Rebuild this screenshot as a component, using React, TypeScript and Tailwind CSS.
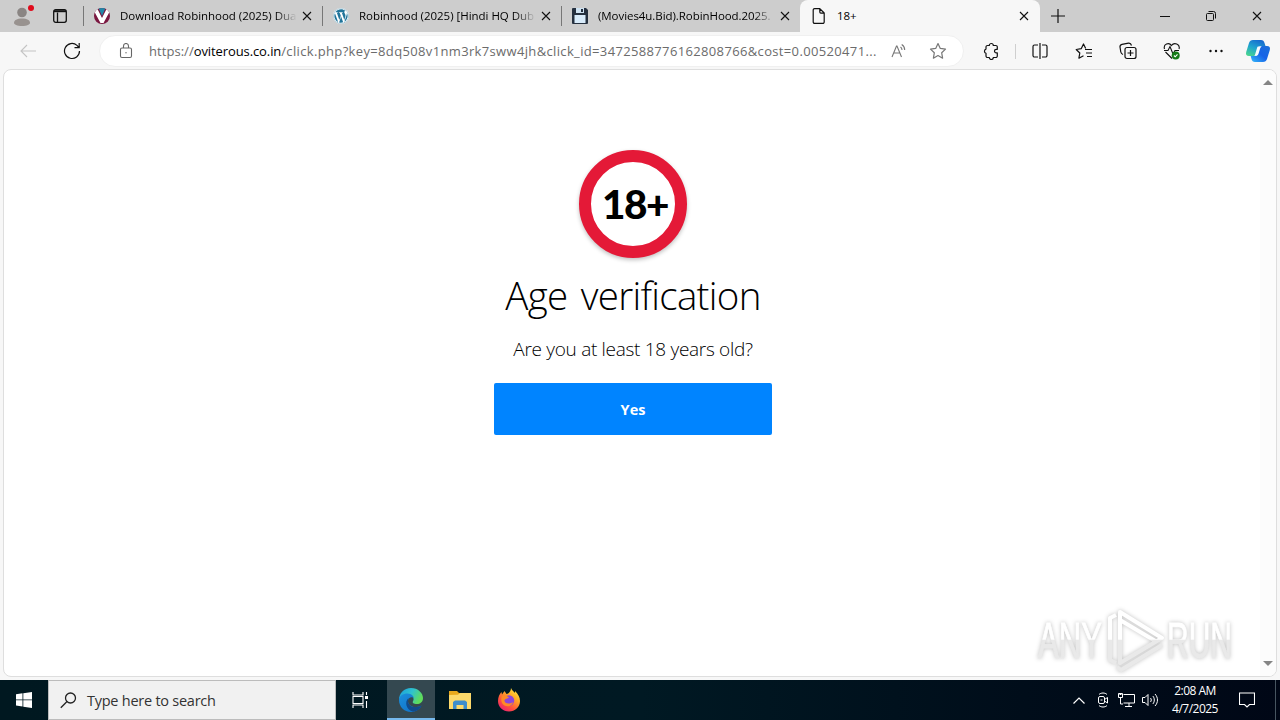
import React from 'react';
import { FaWordpress } from 'react-icons/fa';

function CloseIcon() {
  return (
    <svg width="10" height="10" viewBox="0 0 10 10" fill="none" stroke="#111" strokeWidth="1.1">
      <path d="M1 1l8 8M9 1l-8 8" />
    </svg>
  );
}

function VegaIcon() {
  return (
    <svg width="16" height="16" viewBox="0 0 16 16">
      <defs>
        <clipPath id="vega">
          <circle cx="8" cy="8" r="8" />
        </clipPath>
      </defs>
      <g clipPath="url(#vega)">
        <rect width="16" height="16" fill="#7a1740" />
        <path d="M0 3l3-3 5 10 5-10 3 3-6.500 12h-3z" fill="#fff" />
        <path d="M4.500 0h7L8 8z" fill="#2187a8" />
      </g>
    </svg>
  );
}

function FloppyIcon() {
  return (
    <svg width="16" height="16" viewBox="0 0 16 16">
      <path d="M1 0h13l2 2v13a1 1 0 0 1-1 1H1a1 1 0 0 1-1-1V1a1 1 0 0 1 1-1z" fill="#25303f" />
      <path d="M4 0h8v5H4z" fill="#cfe2f1" />
      <path d="M9 1h2v3H9z" fill="#25303f" />
      <path d="M2.500 7h11v8h-11z" fill="#d8ebfa" />
    </svg>
  );
}

function PageIcon() {
  return (
    <svg width="16" height="16" viewBox="0 0 16 16" fill="none" stroke="#111" strokeWidth="1.200" strokeLinejoin="round">
      <path d="M3.200.6h5.600l4.400 4.400v9a1.400 1.400 0 0 1-1.400 1.400H3.600A1.400 1.400 0 0 1 2.200 14V2A1.400 1.400 0 0 1 3.600.6M8.800.6v3.500a1 1 0 0 0 1 1h3.400" />
    </svg>
  );
}

const tabs = [
  { title: 'Download Robinhood (2025) Dua', icon: <VegaIcon />, spacing: 'tracking-[-0.03px]' },
  { title: 'Robinhood (2025) [Hindi HQ Dub', icon: <FaWordpress size={16} color="#21759b" className="rounded-full bg-white" />, spacing: 'tracking-[-0.03px]' },
  { title: '(Movies4u.Bid).RobinHood.2025.', icon: <FloppyIcon />, spacing: 'tracking-[-0.06px]' },
];

function TabStrip() {
  return (
    <div className="flex h-8 bg-[#cdcdcd]">
      <div className="relative flex w-[83px] shrink-0 items-center">
        <svg width="20" height="20" viewBox="0 0 20 20" className="ml-3" fill="#8a8583">
          <circle cx="10" cy="6.500" r="4.800" />
          <path d="M2 17c0-3 3-4.500 8-4.500s8 1.500 8 4.500c0 1.500-3 3-8 3s-8-1.500-8-3z" fill="#98928f" />
        </svg>
        <span className="absolute left-7 top-[5px] h-[6px] w-[6px] rounded-full bg-[#e00b1c]" />
        <svg width="14" height="14" viewBox="0 0 14 14" className="ml-[21px]" fill="none" stroke="#111" strokeWidth="1.300">
          <rect x=".7" y=".7" width="12.600" height="12.600" rx="2" />
          <path d="M1 2.200h12" strokeWidth="2" />
          <path d="M4.500 3.500v10" />
        </svg>
      </div>
      {tabs.map((tab) => (
        <div key={tab.title} className="flex w-[239px] shrink-0 items-center">
          <div className="h-5 w-px bg-[#777]" />
          <div className="ml-[10px] w-4 shrink-0">{tab.icon}</div>
          <div
            className={`ml-[10px] w-[177px] overflow-hidden whitespace-nowrap bg-[linear-gradient(90deg,#000_88%,transparent_100%)] bg-clip-text text-[11.5px] text-transparent ${tab.spacing}`}
          >
            {tab.title}
          </div>
          <div className="ml-[5px]">
            <CloseIcon />
          </div>
        </div>
      ))}
      <div className="flex w-60 shrink-0 items-center rounded-t-lg bg-[#f7f7f7]">
        <div className="ml-[11px] w-4">
          <PageIcon />
        </div>
        <span className="ml-[10px] text-[11.5px] tracking-[-0.1px] text-black">18+</span>
        <div className="ml-auto mr-[11px]">
          <CloseIcon />
        </div>
      </div>
      <div className="flex grow items-center">
        <svg width="14" height="14" viewBox="0 0 14 14" className="ml-[11px]" stroke="#111" strokeWidth="1.200">
          <path d="M7 0v14M0 7h14" />
        </svg>
        <svg width="10" height="10" viewBox="0 0 10 10" className="ml-[95px]" stroke="#111">
          <path d="M0 5.500h10" />
        </svg>
        <svg width="10" height="10" viewBox="0 0 10 10" className="ml-9" fill="none" stroke="#111">
          <rect x=".5" y="2.500" width="7" height="7" rx="1" />
          <path d="M2.500 .5H7.500a2 2 0 0 1 2 2V7.500" />
        </svg>
        <div className="ml-[36px]">
          <CloseIcon />
        </div>
      </div>
    </div>
  );
}

function Toolbar() {
  return (
    <div className="flex h-[38px] items-center">
      <svg width="16" height="14" viewBox="0 0 16 14" className="ml-5" fill="none" stroke="#c4c4c4" strokeWidth="1.100">
        <path d="M7 1L1 7l6 6M1 7h15" />
      </svg>
      <svg width="18" height="18" viewBox="0 0 18 18" className="ml-[27px]" fill="none" stroke="#111" strokeWidth="1.200">
        <path d="M16.500 9A7.500 7.500 0 1 1 14 3.400L16 5.500M16.200 1v4.700h-4.700" />
      </svg>
      <div className="ml-[18px] flex h-8 w-[865px] shrink-0 items-center rounded-full border border-[#f0f0f0] bg-white">
        <svg width="14" height="16" viewBox="0 0 14 16" className="ml-[19px]" fill="none" stroke="#666" strokeWidth="1.100">
          <rect x="1.500" y="5" width="11" height="9.500" rx="1.500" />
          <path d="M4.500 5V3a2.500 2.500 0 0 1 5 0v2" />
          <circle cx="7" cy="9.700" r=".7" fill="#666" stroke="none" />
        </svg>
        <div className="ml-[16px] mt-px w-[730px] whitespace-nowrap text-[13px] tracking-[0.35px] text-[#6b6b6b]">
          <span className="tracking-[0.05px]">https://</span>
          <span className="tracking-[-0.1px] text-black">oviterous.co.in</span>
          /click.php?key=8dq508v1nm3rk7sww4jh&amp;click_id=3472588776162808766&amp;cost=0.00520471...
        </div>
        <svg width="17" height="16" viewBox="0 0 17 16" className="ml-[12px]" fill="none" stroke="#777" strokeWidth="1.100">
          <path d="M1 14L5.500 3h.500l4.500 11M2.500 10h6.500M9.500 4c1 .7 1.500 1.800 1.500 3M10.700 1.500c2 1.200 3 3 3 5.500" />
        </svg>
        <svg width="18" height="18" viewBox="0 0 18 18" className="ml-[21px]" fill="none" stroke="#777" strokeWidth="1.200" strokeLinejoin="round">
          <path d="M9 1.500l2.300 4.900 5.200.7-3.800 3.700.9 5.400L9 13.600l-4.600 2.600.9-5.400L1.500 7.100l5.200-.7z" />
        </svg>
      </div>
      <svg width="16" height="18" viewBox="0 0 16 18" className="ml-[19px]" fill="none" stroke="#111" strokeWidth="1.200" strokeLinejoin="round">
        <path d="M4.500 3.500H6.300a2 2 0 0 1 4 0h2.500a1.500 1.500 0 0 1 1.500 1.500v2.300h-1a1.800 1.800 0 0 0 0 3.600h1V14a1.500 1.500 0 0 1-1.500 1.500h-2.500a2 2 0 0 1-4 0H4.500A1.500 1.500 0 0 1 3 14v-2.700a2.200 2.200 0 0 1 0-4.200V5a1.500 1.500 0 0 1 1.500-1.500z" />
      </svg>
      <div className="ml-[16px] h-[15px] w-px bg-[#cfcfcf]" />
      <svg width="16" height="16" viewBox="0 0 16 16" className="ml-[16px]" fill="none" stroke="#111" strokeWidth="1.200">
        <path d="M6 2H2.500a1.500 1.500 0 0 0-1.500 1.500v9a1.500 1.500 0 0 0 1.500 1.500H6M8 0v16M10 2h3.500a1.500 1.500 0 0 1 1.500 1.500v9a1.500 1.500 0 0 1-1.500 1.500H10" />
      </svg>
      <svg width="18" height="17" viewBox="0 0 18 17" className="ml-[27px]" fill="none" stroke="#111" strokeWidth="1.200" strokeLinejoin="round">
        <path d="M10.700 5.500L8.500 1 6.200 5.700l-5 .8 3.600 3.500-.9 5.200 4.600-2.500M10 6.500h7M11 10h6M12 13.500h5" />
      </svg>
      <svg width="18" height="18" viewBox="0 0 18 18" className="ml-[26px]" fill="none" stroke="#111" strokeWidth="1.200">
        <rect x="6" y="5.500" width="11" height="11" rx="2" />
        <path d="M11.500 8v6M8.500 11h6M4 12.500C2.500 12 2 11 1.800 10L1 5C.8 3.500 1.500 2.700 3 2.300L9.500 1.200c1.500-.2 2.500.5 3 2.300" />
      </svg>
      <svg width="18" height="18" viewBox="0 0 18 18" className="ml-[26px]" fill="none" stroke="#111" strokeWidth="1.100">
        <path d="M1.500 7C0 2 6 0 8.500 3.500 11 0 17.500 2 16 7M2.500 10l6.500 6.500M1 8.500h4l2-4L10 12l2-3.500h4" />
        <circle cx="12.700" cy="13.500" r="4" fill="#167b18" stroke="none" />
        <path d="M10.900 13.500l1.300 1.300 2.300-2.500" stroke="#fff" />
      </svg>
      <svg width="14" height="4" viewBox="0 0 14 4" className="ml-[28px]" fill="#111">
        <circle cx="1.500" cy="2" r="1.200" />
        <circle cx="7" cy="2" r="1.200" />
        <circle cx="12.500" cy="2" r="1.200" />
      </svg>
      <svg width="26" height="24" viewBox="0 0 26 24" className="ml-[22px]">
        <defs>
          <linearGradient id="copilotA" x1=".7" y1="0" x2=".2" y2="1">
            <stop offset="0" stopColor="#1669cf" />
            <stop offset=".5" stopColor="#1fa4cf" />
            <stop offset="1" stopColor="#48d490" />
          </linearGradient>
          <linearGradient id="copilotB" x1="1" y1="0" x2="0" y2="1">
            <stop offset="0" stopColor="#1a6fd8" />
            <stop offset=".5" stopColor="#1763e8" />
            <stop offset="1" stopColor="#35b9fa" />
          </linearGradient>
        </defs>
        <path d="M8 1h8c2 0 3 1 3.500 3l1 3h-4c-2 0-3 1-3.500 3l-1.500 5c-.5 1.500-1.500 2-3 2H4c-2.500 0-3.500-1.500-2.800-4L4 4c.6-2 2-3 4-3z" fill="url(#copilotA)" />
        <path d="M18 23h-8c-2 0-3-1-3.500-3l-.8-3h3.800c2 0 3-1 3.500-3l1.500-5c.5-1.500 1.500-2 3-2H22c2.500 0 3.500 1.500 2.800 4L22 20c-.6 2-2 3-4 3z" fill="url(#copilotB)" />
        <path d="M12.800 7.500h4c-1 .6-1.500 1.500-1.900 2.700l-1.300 4.300c-.5 1.500-1.300 2.300-2.800 2.300H9.200c.6-.4.9-1.200 1.200-2.300l1.400-4.800c.2-.9.500-1.600 1-2.200z" fill="#f7fbff" />
      </svg>
    </div>
  );
}

function Watermark() {
  return (
    <svg
      width="204"
      height="72"
      viewBox="0 0 204 72"
      className="absolute bottom-0 right-[38px] drop-shadow-[0_0_2px_rgba(0,0,0,0.25)]"
    >
      <defs>
        <linearGradient id="mark" x1="0" y1="0" x2="0" y2="72" gradientUnits="userSpaceOnUse">
          <stop offset=".49" stopColor="#fff" />
          <stop offset=".5" stopColor="#e9e9e9" />
        </linearGradient>
      </defs>
      <g fill="url(#mark)" stroke="url(#mark)" strokeWidth=".8" fontFamily="Liberation Sans" fontSize="50">
        <text x="4" y="54" textLength="64" lengthAdjust="spacingAndGlyphs">ANY</text>
        <text x="133" y="54" textLength="65" lengthAdjust="spacingAndGlyphs">RUN</text>
      </g>
      <g fill="none" stroke="url(#mark)" strokeWidth="4" strokeLinejoin="round">
        <path d="M86 55V8l42 26-42 25V16l37 22" />
        <path d="M82 11l-6 3v42l6 3M83 63l4 3 41-25" />
      </g>
    </svg>
  );
}

function PageContent() {
  return (
    <div className="relative mx-[3px] flex h-[608px] overflow-hidden rounded-lg border border-[#dedede] bg-white">
      <div className="flex grow flex-col items-center pl-[2px]">
        <div className="mt-[80px] flex h-[108px] w-[108px] items-center justify-center rounded-full border-[12px] border-[#e41937] bg-white shadow-[0_2px_4px_rgba(0,0,0,0.25)]">
          <span className="ml-[4px] font-['Lato'] text-[40.5px] font-black leading-none tracking-[-1.5px] text-black">18+</span>
        </div>
        <h1 className="mt-[9px] whitespace-nowrap text-[38.5px] font-light leading-[56px] tracking-[-0.7px] text-black [word-spacing:4px]">Age verification</h1>
        <p className="mt-[11px] whitespace-nowrap text-[19px] font-light leading-[30px] tracking-[-0.3px] text-black">Are you at least 18 years old?</p>
        <button className="mt-[19px] h-[52px] w-[278px] rounded-[2px] bg-[#0084ff] pt-px text-[14.5px] font-bold text-white">Yes</button>
      </div>
      <div className="flex w-[16px] flex-col items-center justify-between bg-[#fcfcfc] pb-[10px] pt-[10px]">
        <svg width="10" height="5" viewBox="0 0 10 5" fill="#858585">
          <path d="M5 0l5 5H0z" />
        </svg>
        <svg width="10" height="5" viewBox="0 0 10 5" fill="#858585">
          <path d="M0 0h10L5 5z" />
        </svg>
      </div>
      <Watermark />
    </div>
  );
}

function EdgeIcon() {
  return (
    <svg width="24" height="24" viewBox="0 0 24 24">
      <defs>
        <linearGradient id="edgeTop" x1="0" y1="0" x2="1" y2=".4">
          <stop offset="0" stopColor="#199bdc" />
          <stop offset=".55" stopColor="#2fc2cf" />
          <stop offset="1" stopColor="#5fdc5b" />
        </linearGradient>
        <linearGradient id="edgeBody" x1="0" y1="0" x2="1" y2="1">
          <stop offset="0" stopColor="#1b8fdc" />
          <stop offset="1" stopColor="#0f6cc4" />
        </linearGradient>
      </defs>
      <path d="M0 12C0 5 5 0 12 0s12 5 12 10c0 4-3 6-6 6-3.500 0-5-1.200-4-2.800 2-3-1-6.200-5-6.200-5 0-9 3-9 5z" fill="url(#edgeTop)" />
      <path d="M0 12c0-4 4-6.500 8.500-6.500 4 0 6.500 3 6.500 5-1-2-6-2-6 2.500 0 5 6 8 13.500 4.500C20.500 21.500 16.500 24 12 24 5 24 0 18.500 0 12z" fill="url(#edgeBody)" />
      <path d="M9.500 10C5 14 7.500 22 14 23.800c4-.4 7-3 8.500-6C15 21 9 18 9 13c0-1 .2-2.200.5-3z" fill="#114a8b" />
    </svg>
  );
}

function FolderIcon() {
  return (
    <svg width="22" height="18" viewBox="0 0 22 18">
      <path d="M0 0h8l2 2h12v16H0z" fill="#e8a91d" />
      <path d="M0 4l9-.3L11 2h11v16H0z" fill="#fcd96b" />
      <path d="M4 18v-7l2-1.500h10l2 1.500v7h-3.500v-4h-7v4z" fill="#3d8dcc" />
    </svg>
  );
}

function FirefoxIcon() {
  return (
    <svg width="24" height="24" viewBox="0 0 24 24">
      <defs>
        <linearGradient id="fox" x1=".9" y1="0" x2=".2" y2="1">
          <stop offset="0" stopColor="#fff14b" />
          <stop offset=".35" stopColor="#ffad25" />
          <stop offset=".7" stopColor="#ff503d" />
          <stop offset="1" stopColor="#e91e75" />
        </linearGradient>
      </defs>
      <path d="M14 0c1 2.500 3 3.500 4 5V3c3 2.500 5 6.500 5 10 0 6-5 10.500-11 10.500S1 19 1 13c0-4 1.500-7 3.500-9L5 6.500C6 5 7 4 7.500 3L9.500 6C12 5.500 14 3 14 0z" fill="url(#fox)" />
      <circle cx="12" cy="12.500" r="5.200" fill="#8c46da" />
      <path d="M5 8c3-1 5 0 7 1.500-1.500 1.500-4 1-4.500 3C7 15 12 17 16 14c-1 5-8 6-11 1-1-2-1-5 0-7z" fill="#ff8a25" />
    </svg>
  );
}

function Taskbar() {
  return (
    <div className="flex h-10 items-stretch bg-[linear-gradient(90deg,#001820_0%,#001923_50%,#000d1a_80%,#000716_100%)] text-white">
      <div className="flex w-12 items-center justify-center">
        <svg width="16" height="16" viewBox="0 0 16 16" fill="#fff">
          <path d="M0 2.200l6.500-.9v6.200H0zM7.300 1.200L16 0v7.500H7.300zM0 8.300h6.500v6.200L0 13.600zM7.300 8.300H16V16l-8.700-1.300z" />
        </svg>
      </div>
      <div className="flex w-[288px] items-center border border-[#bcbcbc] bg-[#f1f1f1] text-[#333]">
        <svg width="17" height="17" viewBox="0 0 17 17" className="ml-[11px]" fill="none" stroke="#222" strokeWidth="1.300">
          <circle cx="10.500" cy="6" r="5" />
          <path d="M7 9.500L.8 15.800" />
        </svg>
        <span className="ml-[10px] mt-px whitespace-nowrap text-[14.5px] tracking-[-0.25px]">Type here to search</span>
      </div>
      <div className="flex w-[51px] items-center justify-center">
        <svg width="17" height="16" viewBox="0 0 17 16" className="mr-[3px]" fill="none" stroke="#fff" strokeWidth="1.100">
          <path d="M1 0v3h10V0M1 16v-3h10v3M1 4.500h10v7H1zM14.500 0v3M14.500 9v7" />
          <path d="M13 4h3v3h-3z" fill="#fff" stroke="none" />
        </svg>
      </div>
      <div className="flex w-12 items-center justify-center border-b-2 border-[#76b9ed] bg-[#344850] pt-[2px]">
        <EdgeIcon />
      </div>
      <div className="flex w-[49px] items-center justify-center">
        <FolderIcon />
      </div>
      <div className="flex w-[49px] items-center justify-center">
        <FirefoxIcon />
      </div>
      <div className="ml-auto flex items-center">
        <svg width="12" height="7" viewBox="0 0 12 7" fill="none" stroke="#fff" strokeWidth="1.200">
          <path d="M.5 6.500L6 1l5.500 5.500" />
        </svg>
        <svg width="12" height="16" viewBox="0 0 12 16" className="ml-[12px]" fill="none" stroke="#fff">
          <rect x="1.500" y="4.500" width="6" height="7" rx="1.500" />
          <path d="M7.500 7.500l3-2v5.500l-3-2M2 2.500c2-2 6-2 8 0M2 13.500c2 2 6 2 8 0M3.500 8h2" />
        </svg>
        <svg width="17" height="16" viewBox="0 0 17 16" className="ml-[9px]" fill="none" stroke="#fff">
          <path d="M5.500 2.500h11v8.500h-11M11 11v3M7 14.500h7M.5 1.500h4v4h-4zM2.500 5.500V12H5" />
          <path d="M1.500 2.500h2" />
        </svg>
        <svg width="17" height="14" viewBox="0 0 17 14" className="ml-[7px]" fill="none" stroke="#fff">
          <path d="M.5 4.500h2.500l3-3v11l-3-3H.5zM8.500 5c1 1.200 1 2.800 0 4M10.800 3c2 2.200 2 5.800 0 8M13 1c3.300 3.500 3.300 8.500 0 12" />
        </svg>
        <div className="ml-[10px] w-[52px] whitespace-nowrap text-center text-[12px] leading-[18px] tracking-[-0.5px]">
          <div>2:08 AM</div>
          <div>4/7/2025</div>
        </div>
        <svg width="16" height="16" viewBox="0 0 16 16" className="ml-[18px] mr-[20px]" fill="none" stroke="#fff" strokeWidth="1.100">
          <path d="M.5 1h15v11.500h-5L8 15l-2.500-2.500h-5z" />
        </svg>
        <div className="mr-1 h-10 w-px bg-[#475560]" />
      </div>
    </div>
  );
}

export default function App() {
  return (
    <div className="flex h-[720px] w-[1280px] flex-col overflow-hidden bg-[#f7f7f7] font-['Open_Sans',sans-serif]">
      <TabStrip />
      <Toolbar />
      <div className="-mt-px h-[611px] shrink-0">
        <PageContent />
      </div>
      <Taskbar />
    </div>
  );
}
